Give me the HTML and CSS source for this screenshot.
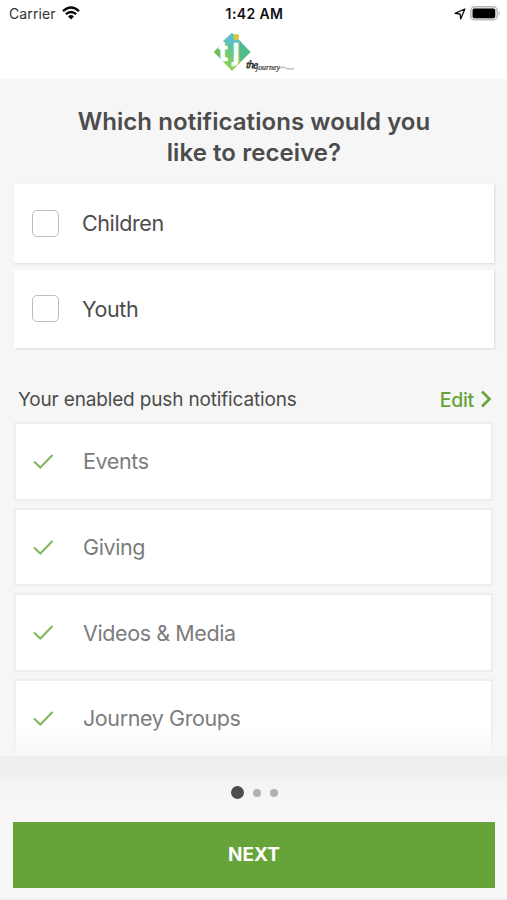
FILE: index.html
```html
<!DOCTYPE html>
<html lang="en">
<head>
<meta charset="utf-8">
<title>Notifications</title>
<link rel="stylesheet" href="styles.css">
</head>
<body>
<div class="screen">
  <header class="header">
    <div class="status">
      <div class="carrier"><span class="carrier-name">Carrier</span>
        <svg class="wifi" viewBox="0 0 18 14"><g fill="none" stroke="#080808" stroke-width="2.4"><path d="M1 5.2Q9-2 17 5.2"/><path d="M3.8 8.2Q9 3.6 14.2 8.2"/></g><path d="M6 10.4Q9 7.8 12 10.4L9 13.6Z" fill="#080808"/></svg>
      </div>
      <div class="time">1:42 AM</div>
      <div class="indicators">
        <svg class="location" viewBox="0 0 12 12"><path d="M1 5.4L10.8 1 6.7 10.9 6.1 6Z" fill="none" stroke="#111" stroke-width="1.35" stroke-linejoin="round"/></svg>
        <svg class="battery" viewBox="0 0 31 15"><rect x=".7" y=".7" width="26.6" height="13.2" rx="4" fill="#e3e3e3" stroke="#b5b5b5" stroke-width="1.2"/><rect x="2.6" y="2.4" width="22.6" height="9.8" rx="2" fill="#000"/><path d="M28.6 5.2Q31 7.3 28.6 9.4Z" fill="#aaa"/></svg>
      </div>
    </div>
    <svg class="logo" viewBox="0 0 84 44">
      <defs>
        <linearGradient id="leaf" x1=".65" y1="0" x2=".4" y2="1"><stop offset="0" stop-color="#4dbcb9"/><stop offset=".48" stop-color="#65c586"/><stop offset="1" stop-color="#96d544"/></linearGradient>
      </defs>
      <path d="M19 1L37.5 20 19 39 1 20Z" fill="url(#leaf)"/>
      <path d="M19 1L28 10 16 13 10 9Z" fill="#5fc0c3"/>
      <path d="M27 9L37.5 20 27 30Z" fill="#44b589" opacity=".6"/>
      <path d="M1 20L8 13 8 27Z" fill="#71be4e"/>
      <circle cx="23.3" cy="5" r="2.9" fill="#d8c83e"/>
      <text class="logo-letter" transform="translate(5.5 29) scale(1 1.05)">t</text>
      <text class="logo-letter" transform="translate(19.5 27.5) scale(1 1.15)">ȷ</text>
      <text class="logo-script logo-the" x="33" y="36" transform="rotate(3 33 36)">the</text>
      <text class="logo-script" x="43" y="37.5" textLength="24" lengthAdjust="spacingAndGlyphs">journey</text>
      <path d="M66 36.7C70 34.4 72 35.4 73 36.2 75 37.5 77 36.6 81 36.8" fill="none" stroke="#777" stroke-width=".7"/>
    </svg>
  </header>

  <main class="content">
    <h1 class="title">Which notifications would you<br>like to receive?</h1>
    <div class="list">
      <label class="card option"><span class="box"></span><span class="name">Children</span></label>
      <label class="card option"><span class="box"></span><span class="name">Youth</span></label>
    </div>
    <div class="section">
      <span class="section-label">Your enabled push notifications</span>
      <a class="edit"><span class="edit-text">Edit</span><svg class="chevron" viewBox="0 0 12 18"><path d="M2 1.5L9.5 9 2 16.5" fill="none" stroke="#66a43a" stroke-width="2.6"/></svg></a>
    </div>
    <div class="list enabled-list">
      <div class="card enabled"><svg class="check" viewBox="0 0 21 15"><path d="M1 7.5L7.3 13.5 19.5 1"/></svg><span class="name">Events</span></div>
      <div class="card enabled"><svg class="check" viewBox="0 0 21 15"><path d="M1 7.5L7.3 13.5 19.5 1"/></svg><span class="name">Giving</span></div>
      <div class="card enabled"><svg class="check" viewBox="0 0 21 15"><path d="M1 7.5L7.3 13.5 19.5 1"/></svg><span class="name">Videos &amp; Media</span></div>
      <div class="card enabled"><svg class="check" viewBox="0 0 21 15"><path d="M1 7.5L7.3 13.5 19.5 1"/></svg><span class="name">Journey Groups</span></div>
    </div>
  </main>

  <footer class="footer">
    <div class="dots"><span class="dot active"></span><span class="dot"></span><span class="dot"></span></div>
    <button class="next">NEXT</button>
  </footer>
</div>
</body>
</html>
```
FILE: styles.css
```css
* { box-sizing: border-box; }

body {
  margin: 0;
  background: #f6f6f6;
  color: #4c4c4c;
  font-family: Inter, "Liberation Sans", sans-serif;
}

.screen {
  display: flex;
  flex-direction: column;
  width: 507px;
  height: 900px;
  overflow: hidden;
}

.header {
  flex: none;
  height: 79px;
  background: #fff;
}

.status {
  display: grid;
  grid-template-columns: 1fr auto 1fr;
  align-items: center;
  height: 28px;
  padding: 0 6px 0 9px;
  color: #111;
  font-size: 14px;
  line-height: 18px;
}

.carrier { display: flex; align-items: center; gap: 6px; }
.carrier-name { color: #333; letter-spacing: 0.1px; }
.wifi { width: 18px; height: 14px; margin-top: -2px; }
.time { font-weight: 600; letter-spacing: 0.4px; margin-left: -1px; }
.indicators { display: flex; align-items: center; justify-content: flex-end; gap: 4px; }
.location { width: 12px; height: 12px; }
.battery { width: 31px; height: 15px; margin-top: -1px; }

.logo { display: block; width: 84px; height: 44px; margin: 4px 0 0 213px; }
.logo-letter { fill: #fff; stroke: #fff; stroke-width: 0.6; font: 700 26px Inter, sans-serif; }
.logo-script { fill: #222; stroke: #222; stroke-width: 0.15; font: italic 400 9px "Liberation Serif", serif; }
.logo-the { font-size: 11px; letter-spacing: -0.8px; stroke-width: 0.4; }

.content {
  flex: none;
  height: 677px;
  overflow: hidden;
  padding: 28px 13px 0 14px;
}

.title {
  margin: 0 0 16px;
  font-size: 24px;
  line-height: 30.5px;
  font-weight: 600;
  letter-spacing: 0.07px;
  text-align: center;
}

.list { display: flex; flex-direction: column; gap: 7px; }

.card {
  display: flex;
  align-items: center;
  height: 78.6px;
  background: #fff;
  font-size: 21.5px;
}

.name { letter-spacing: -0.4px; }

.option {
  width: 480px;
  padding-left: 18px;
  box-shadow: 1px 1px 2px #dadada;
}

.box {
  width: 27px;
  height: 27px;
  margin-right: 23px;
  border: 1.5px solid #bdbdbd;
  border-radius: 5px;
}

.section {
  display: flex;
  align-items: center;
  justify-content: space-between;
  height: 30px;
  margin-top: 36px;
  padding: 0 2px 0 4px;
}

.section-label { font-size: 19px; letter-spacing: -0.16px; }
.edit { display: flex; align-items: center; gap: 6px; color: #66a43a; font-size: 19.5px; font-weight: 500; }
.edit-text { padding-top: 2px; letter-spacing: -0.25px; }
.chevron { width: 12px; height: 18px; }

.enabled-list { margin-top: 8px; }

.enabled {
  flex: none;
  width: 479px;
  padding-left: 17px;
  border: 2px solid #eee;
  color: #7c7c7c;
}

.check { width: 21px; height: 15px; margin-right: 29px; fill: none; stroke: #80b65e; stroke-width: 2; }

.footer {
  flex: 1;
  position: relative;
  display: flex;
  flex-direction: column;
  padding: 30px 12px 0 13px;
  background: linear-gradient(#eee 0, #efefef 18px, #f4f4f4 28px, #f7f7f7 54px);
  border-bottom: 2px solid #eee;
}

.footer::before {
  content: "";
  position: absolute;
  left: 0;
  right: 0;
  top: -32px;
  height: 32px;
  background: linear-gradient(rgba(246, 246, 246, 0), rgba(246, 246, 246, .95));
}

.dots { display: flex; align-items: center; justify-content: center; gap: 9px; height: 13px; }
.dot { width: 8px; height: 8px; border-radius: 50%; background: #b0b0b0; }
.dot.active { width: 13px; height: 13px; background: #4d4d4d; }

.next {
  height: 66px;
  margin-top: 23px;
  padding: 0 0 2px;
  border: 0;
  background: #66a338;
  color: #fff;
  font: 700 19px Inter, sans-serif;
}
```
